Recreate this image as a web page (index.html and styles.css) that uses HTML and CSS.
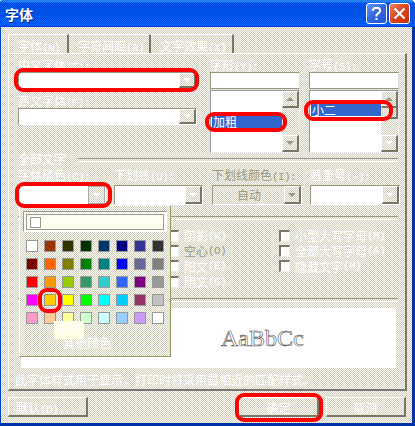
FILE: index.html
```
<!DOCTYPE html>
<html lang="zh-CN">
<head>
<meta charset="utf-8">
<title>字体</title>
<link rel="stylesheet" href="styles.css">
</head>
<body>
<main class="dialog">
  <header class="title"><h1>字体</h1>
    <span class="cap help"><svg width="19" height="19" viewBox="0 0 19 19"><path d="M6 7V5.500L7.500 4h4L13 5.500v2L9.500 11v1.500M9.500 14v2" fill="none" stroke="#fff" stroke-width="2"/></svg></span>
    <span class="cap close"><svg width="19" height="19" viewBox="0 0 19 19"><path d="M4.500 4.500l10 10M14.500 4.500l-10 10" fill="none" stroke="#fff" stroke-width="2.200"/></svg></span>
  </header>
  <nav class="tabs"><span class="tab t1">字体<i>(N)</i></span><span class="tab t2">字符间距<i>(R)</i></span><span class="tab t3">文字效果<i>(X)</i></span></nav>
  <section class="panel">
    <div class="top">
      <div class="col">
        <label>中文字体<i>(T):</i></label>
        <div class="combo"><b class="arrow"></b></div>
        <label class="second">西文字体<i>(F):</i></label>
        <div class="combo"><b class="arrow"></b></div>
      </div>
      <div class="col">
        <label>字形<i>(Y):</i></label>
        <div class="field"></div>
        <div class="list"><div class="items"><div class="sel bold">加粗</div></div><div class="scroll"><b class="arrow up"></b><b class="arrow gray"></b></div></div>
      </div>
      <div class="col">
        <label>字号<i>(S):</i></label>
        <div class="field"></div>
        <div class="list"><div class="items"><div class="sel size">小二</div></div><div class="scroll"><b class="arrow up"></b><b class="thumb"></b><b class="arrow"></b></div></div>
      </div>
    </div>
    <div class="rule all"><span>全部文字</span></div>
    <div class="combos">
      <div><label>字体颜色<i>(C):</i></label><div class="combo"><b class="arrow flat"></b></div></div>
      <div><label>下划线<i>(U):</i></label><div class="combo"><b class="arrow"></b></div></div>
      <div class="off"><label>下划线颜色<i>(I):</i></label><div class="combo"><span>自动</span><b class="arrow gray"></b></div></div>
      <div><label>着重号<i>(·):</i></label><div class="combo"><b class="arrow"></b></div></div>
    </div>
    <div class="rule effect"></div>
    <div class="checks">
      <div><p><b></b>阴影<i>(W)</i></p><p class="off"><b></b>空心<i>(O)</i></p><p><b></b>阳文<i>(E)</i></p><p><b></b>阴文<i>(G)</i></p></div>
      <div><p><b></b>小型大写字母<i>(M)</i></p><p><b></b>全部大写字母<i>(A)</i></p><p><b></b>隐藏文字<i>(H)</i></p></div>
    </div>
    <div class="rule preview-rule"></div>
    <div class="preview">AaBbCc</div>
    <p class="note">此字体样式用于显示，打印时将采用最相近的匹配样式。</p>
  </section>
  <footer><span class="button">默认<i>(D)...</i></span><span class="button ok">确定</span><span class="button">取消</span></footer>

  <aside class="popup">
    <div class="auto"><div><b></b></div></div>
    <div class="swatches">
      <b class="c1"></b><b class="c2"></b><b class="c3"></b><b class="c4"></b><b class="c5"></b><b class="c6"></b><b class="c7"></b><b class="c8"></b>
      <b class="c9"></b><b class="c10"></b><b class="c11"></b><b class="c12"></b><b class="c13"></b><b class="c14"></b><b class="c15"></b><b class="c16"></b>
      <b class="c17"></b><b class="c18"></b><b class="c19"></b><b class="c20"></b><b class="c21"></b><b class="c22"></b><b class="c23"></b><b class="c24"></b>
      <b class="c25"></b><b class="c26"></b><b class="c27"></b><b class="c28"></b><b class="c29"></b><b class="c30"></b><b class="c31"></b><b class="c32"></b>
      <b class="c33"></b><b class="c34"></b><b class="c35"></b><b class="c36"></b><b class="c37"></b><b class="c38"></b><b class="c39"></b><b class="c40"></b>
    </div>
    <div class="more">其他颜色</div>
    <div class="tip">金色</div>
  </aside>
  <em class="mark m1"></em><em class="mark m2"></em><em class="mark m3"></em><em class="mark m4"></em><em class="mark m5"></em><em class="mark m6"></em>
</main>
</body>
</html>
```
FILE: styles.css
```
* { box-sizing: border-box; }
body, h1, p { margin: 0; }
body { width: 415px; height: 426px; overflow: hidden; background: #fff; }
i { font: 11px "Liberation Mono", monospace; letter-spacing: -.6px; }
label { display: block; height: 13px; line-height: 13px; white-space: nowrap; }
.dialog, .arrow, .scroll, .off .combo {
  background-color: #ccc;
  background-image: conic-gradient(#fffbe6 25%, #ccc 0 50%, #fffbe6 0 75%, #ccc 0);
  background-size: 2px 2px;
}
.dialog {
  position: relative; width: 415px; height: 426px;
  border: solid #0046d5; border-width: 0 3px 3px 1px; border-right-color: #0033a8; border-bottom-color: #0033a8;
  border-radius: 3px 5px 0 0;
  color: #fff; font: 12px/13px "Noto Sans CJK SC", sans-serif;
}
.title {
  display: flex; align-items: center; gap: 2px; height: 27px; margin: 0 -3px 0 -1px; padding: 0 5px;
  border-radius: 3px 5px 0 0;
  background: conic-gradient(#0033cc80 25%, #0066ff00 0 50%, #0033cc80 0 75%, #0066ff00 0) 0 0 / 2px 2px,
    linear-gradient(#39f 0 2px, #005cf0 3px 16px, #06f 20px 25px, #0046d5);
}
.title h1 { flex: 1; font-size: 14px; line-height: 24px; text-shadow: 1px 1px #039; }
.cap { width: 21px; height: 21px; border: 1px solid #fff; border-radius: 3px; }
.cap svg { display: block; }
.help { background: linear-gradient(135deg, #69f, #36d 50%, #2458dc); }
.close { background: linear-gradient(135deg, #f08060, #d8431c 50%, #c93000); }
.tabs { display: flex; height: 26px; margin-left: 7px; padding-top: 7px; }
.tab { height: 19px; padding: 4px 0 0 9px; border-top: 1px solid #fff; border-right: 2px solid #777766; white-space: nowrap; }
.t1 { width: 61px; border-left: 1px solid #fff; }
.t2 { width: 82px; }
.t3 { width: 83px; }
.panel { width: 399px; height: 338px; margin-left: 7px; padding: 4px 7px 0 9px; border: 1px solid #fff; border-right: 2px solid #777770; border-bottom: 2px solid #777770; }
.top { display: grid; grid-template-columns: 183px 90px 90px; column-gap: 9px; height: 94px; }
.top .col:first-child { width: 179px; }
.top .combo { margin-top: 1px; height: 17px; }
.top .second { margin-top: 5px; }
.combo { display: flex; justify-content: flex-end; height: 20px; background: #fff; border: 1px solid #999980; border-right-color: #fff; border-bottom-color: #fff; }
.arrow { position: relative; flex: none; width: 17px; height: 100%; border: 1px solid #fff; border-right: 2px solid #777766; border-bottom: 2px solid #777766; }
.combo .arrow { display: grid; place-items: center; }
.arrow::after { content: ""; border: solid transparent; border-width: 4px 4px 0; border-top-color: #fff; }
.arrow.gray::after { border-top-color: #999980; }
.arrow.flat { border: 1px solid #aaa; }
.field { height: 17px; margin-top: 1px; background: #fff; border: 1px solid #999980; border-right-color: #ddd; }
.list { display: flex; height: 63px; margin-top: 1px; background: #fff; border: 1px solid #999; border-right-color: #eee; border-bottom-color: #eee; }
.items { flex: 1; }
.sel { height: 13px; margin-left: 1px; padding-left: 1px; background: #36c; line-height: 13px; }
.bold { margin-top: 24px; }
.size { margin-top: 12px; }
.scroll { display: flex; flex-direction: column; width: 17px; }
.scroll .arrow { display: grid; place-items: center; height: 17px; }
.scroll .arrow:last-child { margin-top: auto; }
.arrow.up::after { border-width: 0 4px 4px; border-bottom-color: #999980; }
.thumb { height: 11px; border-right: 2px solid #777766; border-bottom: 2px solid #777766; }
.rule { display: flex; align-items: center; }
.rule::after { content: ""; flex: 1; height: 2px; border-top: 1px solid #999980; border-bottom: 1px solid #fff; }
.all { height: 16px; gap: 12px; }
.all span { margin-bottom: 4px; }
.combos { display: grid; grid-template-columns: 88px 89px 90px 90px; column-gap: 8px; }
.combos > div:nth-child(n+3) { margin-left: 1px; margin-right: -1px; }
.combos label { margin-bottom: 4px; }
.off { color: #999980; }
.off .combo span { flex: 1; padding-left: 24px; line-height: 17px; }
.effect { margin-top: 12px; height: 2px; }
.checks { display: flex; height: 80px; padding: 9px 0 0 150px; }
.checks > div:first-child { width: 111px; }
.checks p { display: flex; align-items: center; height: 15.300px; white-space: nowrap; }
.checks p b { width: 11px; height: 12px; margin-right: 5px; background: #fff; border: 1px solid #eee; border-top: 2px solid #777766; border-left: 2px solid #777766; }
.preview-rule { height: 2px; }
.preview { width: 375px; height: 60px; margin: 7px 0 0 3px; padding-left: 200px; background: #fff; font: 24px/60px "Liberation Serif", serif; -webkit-text-stroke: .6px #555; }
.note { margin: 5px 0 0 -3px; white-space: nowrap; }
footer { display: flex; gap: 7px; height: 20px; margin: 6px 6px 0 7px; }
.button { width: 80px; height: 20px; padding-top: 3px; text-align: center; border: 1px solid #fff; border-right: 2px solid #777766; border-bottom: 2px solid #777766; }
.button:first-child { padding-left: 7px; text-align: left; }
.ok { margin-left: auto; }
.popup {
  position: absolute; left: 18px; top: 205px; width: 152px; height: 152px; padding: 5px 3px;
  border: 1px solid #fff; border-right-color: #999966; border-bottom-color: #999966;
  background: conic-gradient(#ffffe6 25%, #ccc 0 50%, #ffffe6 0 75%, #ccc 0) 0 0 / 2px 2px;
}
.auto { width: 144px; height: 21px; padding: 2px; border: 1px solid #999; border-right-color: #fff; border-bottom-color: #fff; background: #fffff0; }
.auto div { width: 138px; height: 16px; padding: 2px 3px; border: 1px solid #999; }
.auto b { display: block; width: 11px; height: 11px; border: 1px solid #999; background: #fff; }
.swatches { display: grid; grid-template-columns: repeat(8, 12px); gap: 6px; margin: 8px 0 0 3px; }
.swatches b { height: 12px; border: 1px solid #999; }
.more { margin-top: 12px; padding-left: 40px; }
.tip { position: absolute; left: 34px; top: 115px; width: 30px; height: 18px; padding: 0 3px; background: #ffffe6; line-height: 12px; }
.c1 { background: #fff; } .c2 { background: #930; } .c3 { background: #330; } .c4 { background: #030; }
.c5 { background: #036; } .c6 { background: #000080; } .c7 { background: #339; } .c8 { background: #333; }
.c9 { background: #800000; } .c10 { background: #f60; } .c11 { background: #808000; } .c12 { background: #008000; }
.c13 { background: #008080; } .c14 { background: #00f; } .c15 { background: #669; } .c16 { background: #808080; }
.c17 { background: #f00; } .c18 { background: #f90; } .c19 { background: #9c0; } .c20 { background: #396; }
.c21 { background: #3cc; } .c22 { background: #36f; } .c23 { background: #800080; } .c24 { background: #999; }
.c25 { background: #f0f; } .c26 { background: #fc0; } .c27 { background: #ff0; } .c28 { background: #0f0; }
.c29 { background: #0ff; } .c30 { background: #0cf; } .c31 { background: #936; } .c32 { background: #c0c0c0; }
.c33 { background: #f9c; } .c34 { background: #fc9; } .c35 { background: #ff9; } .c36 { background: #cfc; }
.c37 { background: #cff; } .c38 { background: #9cf; } .c39 { background: #c9f; } .c40 { background: #fff; }
.mark { position: absolute; border: 4px solid #f00; border-radius: 9px; }
.m1 { left: 13px; top: 68px; width: 185px; height: 24px; }
.m2 { left: 204px; top: 112px; width: 82px; height: 20px; }
.m3 { left: 303px; top: 100px; width: 89px; height: 21px; }
.m4 { left: 14px; top: 182px; width: 97px; height: 26px; }
.m5 { left: 37px; top: 288px; width: 24px; height: 25px; }
.m6 { left: 234px; top: 393px; width: 88px; height: 29px; }
```
